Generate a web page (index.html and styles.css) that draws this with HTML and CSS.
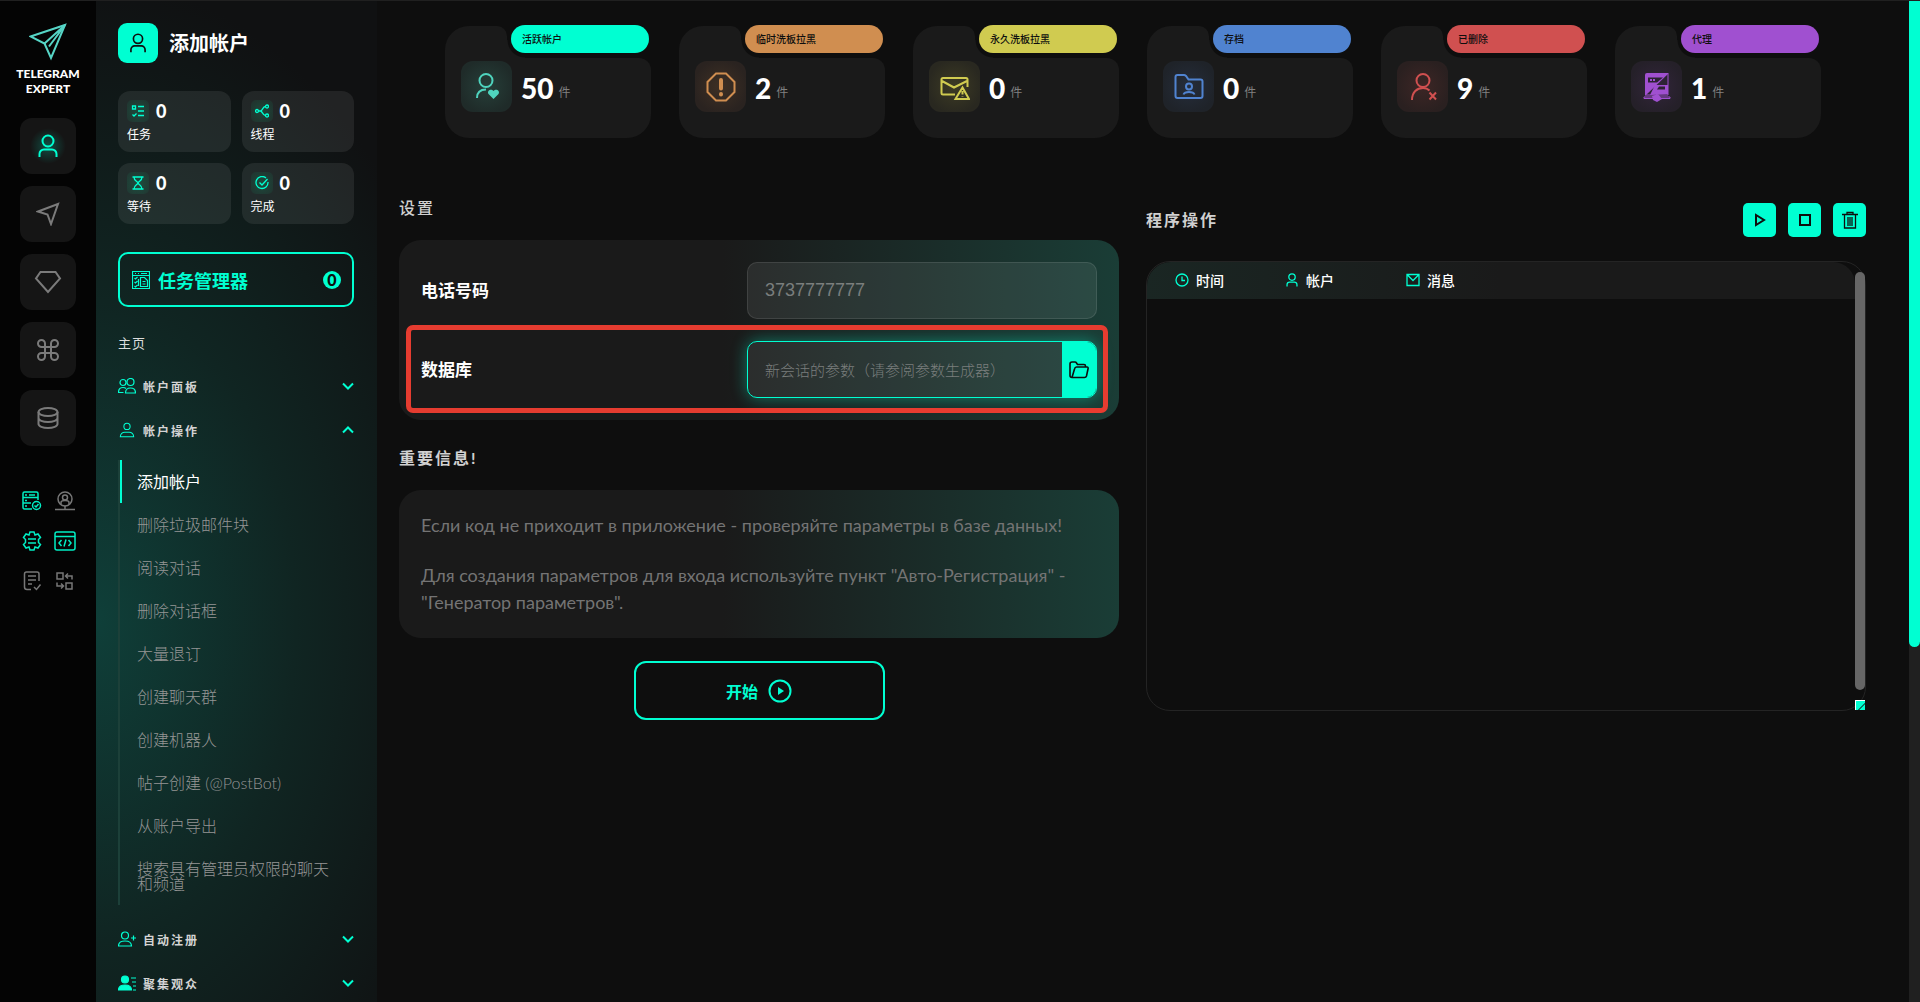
FILE: index.html
```html
<!DOCTYPE html>
<html lang="zh-CN">
<head>
    <meta charset="UTF-8">
    <meta name="viewport" content="width=device-width, initial-scale=1.0">
    <title>Telegram Expert</title>
    <link rel="stylesheet" href="styles.css">
</head>
<body>
    <svg class="sprite" aria-hidden="true">
        <symbol id="user" viewBox="0 0 24 24"><circle cx="12" cy="7" r="5.500"/><path d="M3.500 23v-3a4.500 4.500 0 0 1 4.500-4.500h8a4.500 4.500 0 0 1 4.500 4.500v3"/></symbol>
        <symbol id="person" viewBox="0 0 18 18"><circle cx="9" cy="5" r="3.500"/><path d="M1.500 16.500c0-3 2.500-5 5-5h5c2.500 0 5 2 5 5z"/></symbol>
        <symbol id="chevron" viewBox="0 0 12 8"><path d="M1 1.500l5 5 5-5"/></symbol>
    </svg>

    <div class="layout">
        <div class="rail">
            <a class="logo" href="#">
                <svg width="38" height="38" viewBox="0 0 38 38"><path d="M1.500 13.500L36 2 22 35l-6.500-14.500z"/><path d="M15.500 20.500L36 2 20 23.500"/></svg>
                <span>TELEGRAM<br>EXPERT</span>
            </a>
            <nav class="rail-nav">
                <button class="active" aria-label="帐户"><svg width="24" height="26"><use href="#user"/></svg></button>
                <button aria-label="发送"><svg width="24" height="24" viewBox="0 0 24 24"><path d="M2 9.500L22 2l-7 20-3.500-9.500z"/></svg></button>
                <button aria-label="高级"><svg width="28" height="24" viewBox="0 0 28 24"><path d="M6.500 2h15L26 8.500 14 22 2 8.500z"/></svg></button>
                <button aria-label="命令"><svg width="24" height="24" viewBox="0 0 24 24"><path d="M9 9V5.500A3.500 3.500 0 1 0 5.500 9h13A3.500 3.500 0 1 0 15 5.500v13a3.500 3.500 0 1 0 3.500-3.500h-13A3.500 3.500 0 1 0 9 18.500z"/></svg></button>
                <button aria-label="数据库"><svg width="24" height="24" viewBox="0 0 24 24"><ellipse cx="12" cy="6" rx="9.500" ry="4"/><path d="M2.500 6v12c0 2.200 4.300 4 9.500 4s9.500-1.800 9.500-4V6M2.500 12c0 2.200 4.300 4 9.500 4s9.500-1.800 9.500-4"/></svg></button>
            </nav>
            <div class="tools">
                <a href="#" class="on" aria-label="服务器"><svg width="20" height="20" viewBox="0 0 20 20"><path d="M10 18H2.500Q1 18 1 16.500v-14Q1 1 2.500 1h12Q16 1 16 2.500V9M1 6.500h15M1 12h8M3 4h2M7 4h6M3 9.500h2M3 15h2"/><circle cx="14.500" cy="14.500" r="4"/><path d="M12.500 14.500l1.500 1.500 2.500-3"/></svg></a>
                <a href="#" aria-label="代理"><svg width="20" height="20" viewBox="0 0 20 20"><circle cx="10" cy="8" r="7"/><circle cx="10" cy="6.500" r="2.500"/><path d="M6 13v-1.500Q6 9.500 10 9.500t4 2V13M10 15v3M0 18.500h20"/></svg></a>
                <a href="#" class="on" aria-label="设置"><svg width="20" height="20" viewBox="0 0 20 20"><path d="M8 1h4l1 3 3-1 2.500 3.500-2 2v3l2 2L16 17l-3-1-1 3H8l-1-3-3 1-2.500-3.500 2-2v-3l-2-2L4 3l3 1z"/><path d="M6 8h8M6 12h8"/></svg></a>
                <a href="#" class="on" aria-label="代码"><svg width="22" height="20" viewBox="0 0 22 20"><rect x="1" y="1" width="20" height="18" rx="2"/><path d="M1 5.500h20M7.500 9L5 12l2.500 3M14.500 9l2.500 3-2.500 3M12 8.500l-2 7"/></svg></a>
                <a href="#" aria-label="报告"><svg width="20" height="20" viewBox="0 0 20 20"><path d="M9 18.500H5Q2.500 18.500 2.500 16V3Q2.500 1 4.500 1H15q2 0 2 2v7M6 5h8M6 9h8M6 13h4M12 16l2.500 2.500 4-5"/></svg></a>
                <a href="#" aria-label="转换"><svg width="20" height="20" viewBox="0 0 20 20"><rect x="2" y="2" width="6" height="6"/><rect x="11" y="12" width="6" height="6"/><path d="M17 8.500V5h-6M13 2.500L10.500 5 13 7.500M2 11.500V15h6M6 12.500L8.500 15 6 17.500"/></svg></a>
            </div>
        </div>

        <aside class="sidebar">
            <div class="page-title">
                <span class="title-icon"><svg width="20" height="22"><use href="#user"/></svg></span>
                <h1>添加帐户</h1>
            </div>

            <div class="counters">
                <div class="counter">
                    <div><i><svg width="14" height="14" viewBox="0 0 14 14"><path d="M1.500 2h3v3h-3zM7 2.500h6M7 7h6M7 11.500h6M1.500 10.500L3 12l2.500-2.500"/></svg></i><b>0</b></div>
                    <span>任务</span>
                </div>
                <div class="counter">
                    <div><i><svg width="14" height="14" viewBox="0 0 14 14"><circle cx="2" cy="7" r="1.500"/><circle cx="12" cy="2.500" r="1.500"/><circle cx="12" cy="11.500" r="1.500"/><path d="M3.500 7h2c2 0 2-4.500 5-4.500M5.500 7c2 0 2 4.500 5 4.500"/></svg></i><b>0</b></div>
                    <span>线程</span>
                </div>
                <div class="counter">
                    <div><i><svg width="14" height="14" viewBox="0 0 14 14"><path d="M1.500 1h11M1.500 13h11M3 1c0 4 3 4 4 6 1-2 4-2 4-6M3 13c0-4 3-4 4-6 1 2 4 2 4 6"/></svg></i><b>0</b></div>
                    <span>等待</span>
                </div>
                <div class="counter">
                    <div><i><svg width="14" height="14" viewBox="0 0 14 14"><path d="M13 6a6 6 0 1 1-2-4M4.500 6.500L7 9l5.500-6"/></svg></i><b>0</b></div>
                    <span>完成</span>
                </div>
            </div>

            <button class="manager">
                <svg width="18" height="18" viewBox="0 0 18 18"><path d="M.5.500h17v17H.5zM.5 4.500h17M3 2.500h1M6 2.500h1M9 2.500h6M2.500 7l1 1 2-2M2.500 11l1 1 2-2M2.500 15l1 1 2-2M8.500 6.500h4l3 3v6h-7zM10.500 10.500h3M10.500 13h3M6.500 8v7"/></svg>
                任务管理器
                <span class="badge">0</span>
            </button>

            <p class="menu-caption">主页</p>
            <nav class="menu">
                <button class="group">
                    <svg width="18" height="16" viewBox="0 0 18 16"><circle cx="5" cy="4.500" r="3"/><circle cx="12.500" cy="4" r="3.500"/><path d="M7.500 15q0-5 5-5t5 5zM5.500 14.500h-5q0-5 4.500-5 2 0 3 1"/></svg>
                    帐户面板
                    <svg class="arrow" width="12" height="8"><use href="#chevron"/></svg>
                </button>
                <button class="group open">
                    <svg width="18" height="16"><use href="#person"/></svg>
                    帐户操作
                    <svg class="arrow" width="12" height="8"><use href="#chevron"/></svg>
                </button>
                <ul class="submenu">
                    <li class="current"><a href="#">添加帐户</a></li>
                    <li><a href="#">删除垃圾邮件块</a></li>
                    <li><a href="#">阅读对话</a></li>
                    <li><a href="#">删除对话框</a></li>
                    <li><a href="#">大量退订</a></li>
                    <li><a href="#">创建聊天群</a></li>
                    <li><a href="#">创建机器人</a></li>
                    <li><a href="#">帖子创建 (@PostBot)</a></li>
                    <li><a href="#">从账户导出</a></li>
                    <li><a href="#">搜索具有管理员权限的聊天和频道</a></li>
                </ul>
                <button class="group">
                    <svg width="18" height="16" viewBox="0 0 18 16"><circle cx="7" cy="4.500" r="3.500"/><path d="M.5 15q0-5 6.500-5t6.500 5zM15.500 4.500v5M13 7h5"/></svg>
                    自动注册
                    <svg class="arrow" width="12" height="8"><use href="#chevron"/></svg>
                </button>
                <button class="group">
                    <svg width="18" height="16" viewBox="0 0 18 16"><g fill="#00ffd2"><circle cx="7" cy="4.500" r="3.500"/><path d="M.5 15q0-5 6.500-5t6.500 5z"/></g><path d="M13 3h5M14 7h4M15 11h3M15 15h3"/></svg>
                    聚集观众
                    <svg class="arrow" width="12" height="8"><use href="#chevron"/></svg>
                </button>
            </nav>
        </aside>

        <main class="content">
            <section class="stats">
                <div class="stat green">
                    <div class="stat-top"><span class="tab"></span><span class="pill">活跃帐户</span></div>
                    <div class="stat-body">
                        <span class="stat-icon"><svg width="30" height="30" viewBox="0 0 30 30"><circle cx="14" cy="8.500" r="6.500"/><path d="M5 26q0-8.500 9-8.500"/><path class="solid" d="M21.500 27l-5-5c-2-3 2.500-6 5-3 2.500-3 7 0 5 3z"/></svg></span>
                        <b>50</b><small>件</small>
                    </div>
                </div>
                <div class="stat orange">
                    <div class="stat-top"><span class="tab"></span><span class="pill">临时洗板拉黑</span></div>
                    <div class="stat-body">
                        <span class="stat-icon"><svg width="30" height="30" viewBox="0 0 30 30"><path d="M10 1.500h10l8.500 8.500v10L20 28.500H10L1.500 20V10z"/><path class="bar" d="M15 8v8.500M15 22v.5"/></svg></span>
                        <b>2</b><small>件</small>
                    </div>
                </div>
                <div class="stat yellow">
                    <div class="stat-top"><span class="tab"></span><span class="pill">永久洗板拉黑</span></div>
                    <div class="stat-body">
                        <span class="stat-icon"><svg width="30" height="30" viewBox="0 0 30 30"><path d="M15 22.500H3q-1.500 0-1.500-1.500V7.500Q1.500 6 3 6h23q1.500 0 1.500 1.500V15M2 9l12 6.500L27 9M22.500 15.500L15.500 27h13.500zM22.500 19v3.500M22.500 24.500v.5"/></svg></span>
                        <b>0</b><small>件</small>
                    </div>
                </div>
                <div class="stat blue">
                    <div class="stat-top"><span class="tab"></span><span class="pill">存档</span></div>
                    <div class="stat-body">
                        <span class="stat-icon"><svg width="30" height="30" viewBox="0 0 30 30"><path d="M1.500 24V5q0-2 2-2H10q1 0 2 1l2.500 3.500h12q2 0 2 2V24q0 2-2 2h-23q-2 0-2-2z"/><circle cx="15" cy="14.500" r="3"/><path d="M9.500 22.500q1-2.500 5.500-2.500t5.500 2.500"/></svg></span>
                        <b>0</b><small>件</small>
                    </div>
                </div>
                <div class="stat red">
                    <div class="stat-top"><span class="tab"></span><span class="pill">已删除</span></div>
                    <div class="stat-body">
                        <span class="stat-icon"><svg width="30" height="30" viewBox="0 0 30 30"><circle cx="15" cy="8.500" r="6.500"/><path d="M4 28c0-8 5-12 11-12 3 0 5 1 6.500 2.500M21.500 20.500l6.500 7M28 20.500l-6.500 7"/></svg></span>
                        <b>9</b><small>件</small>
                    </div>
                </div>
                <div class="stat purple">
                    <div class="stat-top"><span class="tab"></span><span class="pill">代理</span></div>
                    <div class="stat-body">
                        <span class="stat-icon"><svg class="thin" width="30" height="30" viewBox="0 0 30 30"><path class="solid" d="M3 3q0-2 2-2h22L3 24z"/><path d="M26 2v21H4M26 13L14 23"/><path class="hole" d="M6 5.500h15L15 10.500H6z"/><path class="solid" d="M8 7h2v2H8zM11 7h2v2h-2zM13 13h13v9L8 23z"/><path class="hole" d="M17 14.500h6v3h-8z"/><path d="M2 26.500h26v-1.500H2z"/><path class="solid" d="M10 24l6-2 4 5-5 3-4-2z"/></svg></span>
                        <b>1</b><small>件</small>
                    </div>
                </div>
            </section>

            <div class="columns">
                <section class="settings">
                    <h2>设置</h2>
                    <form class="panel form">
                        <div class="row">
                            <label for="phone">电话号码</label>
                            <input type="text" id="phone" class="field" placeholder="3737777777">
                        </div>
                        <div class="row marked">
                            <label for="base">数据库</label>
                            <div class="field picker">
                                <input type="text" id="base" placeholder="新会话的参数（请参阅参数生成器）">
                                <button type="button" aria-label="选择文件夹"><svg width="20" height="18" viewBox="0 0 20 18"><path d="M3 16.500q-2 0-2-2V3q0-2 2-2h3q1 0 1.500 1L8.500 3.500H15q1.500 0 1.500 1.500v1M3 16.500L5.500 8q.5-2 2-2H18q1.500 0 1 2l-1.500 7q-.5 1.500-2 1.500z"/></svg></button>
                            </div>
                        </div>
                    </form>

                    <h2 class="strong">重要信息!</h2>
                    <div class="panel info" lang="ru">
                        <p>Если код не приходит в приложение - проверяйте параметры в базе данных!</p>
                        <p>Для создания параметров для входа используйте пункт "Авто-Регистрация" - "Генератор параметров".</p>
                    </div>

                    <button class="start">开始 <svg width="24" height="24" viewBox="0 0 24 24"><circle cx="12" cy="12" r="10.500"/><path class="solid" d="M10 8v8l6-4z"/></svg></button>
                </section>

                <section class="log">
                    <div class="log-head">
                        <h2>程序操作</h2>
                        <div class="log-buttons">
                            <button aria-label="开始"><svg width="12" height="14" viewBox="0 0 12 14"><path d="M2 2v10l8-5z"/></svg></button>
                            <button aria-label="停止"><svg width="14" height="14" viewBox="0 0 14 14"><path d="M2 2h10v10H2z"/></svg></button>
                            <button aria-label="清除"><svg class="fine" width="16" height="18" viewBox="0 0 16 18"><path d="M0 3.500h16M5 3V1.500h6V3M2.500 4v13h11V4M6 6v9M8 6v9M10 6v9"/></svg></button>
                        </div>
                    </div>
                    <div class="log-box">
                        <table>
                            <thead>
                                <tr>
                                    <th><span><svg width="14" height="14" viewBox="0 0 14 14"><circle cx="7" cy="7" r="6"/><path d="M7 3.500V7.500h3"/></svg>时间</span></th>
                                    <th><span><svg class="thick" width="14" height="14"><use href="#user"/></svg>帐户</span></th>
                                    <th><span><svg width="14" height="14" viewBox="0 0 14 14"><path d="M1 1.500h12v11H1zM1.500 2L7 7.500 12.500 2"/></svg>消息</span></th>
                                </tr>
                            </thead>
                            <tbody></tbody>
                        </table>
                        <div class="log-scroll"><span class="log-thumb"></span><span class="resizer"></span></div>
                    </div>
                </section>
            </div>
        </main>

        <div class="page-scroll"><span></span></div>
    </div>
</body>
</html>
```
FILE: styles.css
```css
* {
    box-sizing: border-box;
}

body {
    margin: 0;
    background-color: #0e0e0e;
    color: #fff;
    font-family: Lato, "Noto Sans CJK SC", sans-serif;
    overflow: hidden;
}

h1, h2, p, ul {
    margin: 0;
    padding: 0;
}

button {
    font-family: inherit;
    cursor: pointer;
    border: none;
    padding: 0;
}

a {
    color: inherit;
    text-decoration: none;
}

svg {
    display: block;
    flex-shrink: 0;
    fill: none;
    stroke: currentColor;
    stroke-width: 2;
}

.sprite {
    position: absolute;
    width: 0;
    height: 0;
}

.layout {
    display: flex;
    height: 100vh;
    border-top: 1px solid #202020;
}

/* left rail */
.rail {
    width: 96px;
    flex-shrink: 0;
    background-color: #040404;
    display: flex;
    flex-direction: column;
    align-items: center;
    padding-top: 22px;
}

.logo {
    display: flex;
    flex-direction: column;
    align-items: center;
    text-align: center;
    font-size: 12px;
    line-height: 15px;
    font-weight: 900;
}

.logo svg {
    margin-bottom: 5px;
    color: #56d5c6;
}

.rail-nav {
    display: flex;
    flex-direction: column;
    gap: 12px;
    margin-top: 22px;
}

.rail-nav button {
    width: 56px;
    height: 56px;
    border-radius: 12px;
    background-color: #151515;
    color: #7b7b7b;
    display: flex;
    align-items: center;
    justify-content: center;
}

.rail-nav .active {
    color: #00ffd2;
    background-image: radial-gradient(circle, rgba(0, 255, 210, 0.25), transparent 45%);
}

.tools {
    display: grid;
    grid-template-columns: 22px 22px;
    gap: 20px 11px;
    margin-top: 45px;
    color: #777;
    justify-items: center;
}

.tools svg {
    stroke-width: 1.5;
}

.tools .on {
    color: #00eec4;
}

/* sidebar */
.sidebar {
    width: 281px;
    flex-shrink: 0;
    padding: 22px 23px 0 22px;
    overflow: hidden;
    background: #101112 radial-gradient(ellipse 400px 640px at 0 62%, #0f3f39, #102522 50%, #101112);
}

.page-title {
    display: flex;
    align-items: center;
    gap: 11px;
}

.title-icon {
    width: 40px;
    height: 40px;
    border-radius: 9px;
    background-color: #00ffd2;
    color: #0e0e0e;
    display: flex;
    align-items: center;
    justify-content: center;
}

h1 {
    font-size: 20px;
    line-height: 30px;
    font-weight: 700;
}

.counters {
    display: grid;
    grid-template-columns: 1fr 1fr;
    gap: 11px;
    margin-top: 28px;
}

.counter {
    height: 61px;
    padding: 9px;
    border-radius: 12px;
    background-color: rgba(255, 255, 255, 0.08);
}

.counter div {
    display: flex;
    align-items: center;
    gap: 7px;
}

.counter i {
    width: 22px;
    height: 22px;
    border-radius: 5px;
    color: #00ffd2;
    background: radial-gradient(circle, rgba(0, 255, 160, 0.15), rgba(0, 255, 160, 0.04));
    display: flex;
    align-items: center;
    justify-content: center;
}

.counter svg {
    stroke-width: 1.3;
}

.counter b {
    font-size: 18px;
    line-height: 22px;
    font-weight: 900;
}

.counter span {
    display: block;
    margin-top: 4px;
    font-size: 12px;
    line-height: 18px;
}

.manager {
    display: flex;
    align-items: center;
    gap: 8px;
    width: 100%;
    height: 55px;
    margin-top: 28px;
    padding: 0 11px 0 12px;
    border: 2px solid #00ffd2;
    border-radius: 10px;
    background: none;
    color: #00ffd2;
    font-size: 18px;
    font-weight: 700;
}

.manager svg {
    stroke-width: 1.2;
}

.badge {
    margin-left: auto;
    width: 18px;
    height: 18px;
    border-radius: 50%;
    background-color: #00ffd2;
    color: #0e0e0e;
    font-size: 16px;
    line-height: 18px;
    text-align: center;
    font-weight: 900;
}

.menu-caption {
    margin-top: 26px;
    font-size: 13px;
    line-height: 20px;
    color: #ddd;
    letter-spacing: 1px;
}

.menu {
    margin-top: 11px;
}

.group {
    display: flex;
    align-items: center;
    gap: 7px;
    width: 100%;
    height: 44px;
    background: none;
    color: #d4d4d4;
    font-size: 12px;
    font-weight: 700;
    letter-spacing: 2px;
}

.group svg {
    color: #00ffd2;
    stroke-width: 1.2;
}

.group .arrow {
    margin-left: auto;
    stroke-width: 2;
}

.group.open .arrow {
    transform: rotate(180deg);
}

.submenu {
    list-style: none;
    margin: 8px 0 12px;
    border-left: 2px solid #1c4039;
    color: #959595;
    font-size: 16px;
    line-height: 15px;
    font-weight: 300;
}

.submenu a {
    display: block;
    padding: 14px 12px 14px 17px;
}

.submenu .current a {
    padding-left: 15px;
    border-left: 2px solid #00ffd2;
    color: #fff;
    font-weight: 400;
}

/* main part */
.content {
    flex: 1;
    min-width: 0;
    padding: 24px 43px 0 22px;
}

.stats {
    display: grid;
    grid-template-columns: repeat(6, 1fr);
    gap: 28px;
    padding: 0 45px 0 46px;
}

.stat-top {
    display: flex;
    height: 33px;
}

.tab {
    position: relative;
    width: 62px;
    margin-top: 1px;
    border-radius: 24px 10px 0 0;
    background-color: #1a1a1a;
}

/* rounded inner corner under the pill */
.tab::after {
    content: "";
    position: absolute;
    left: 100%;
    bottom: 0;
    width: 18px;
    height: 18px;
    background: radial-gradient(circle at 100% 0, transparent 17px, #1a1a1a 18px);
}

.pill {
    flex: 1;
    height: 28px;
    margin: 0 2px 0 4px;
    padding-left: 11px;
    border-radius: 14px;
    background-color: var(--tone);
    color: #0e0e0e;
    font-size: 10px;
    line-height: 28px;
    font-weight: 500;
    position: relative;
    z-index: 1;
}

.stat-body {
    display: flex;
    align-items: center;
    padding: 3px 16px 26px;
    border-radius: 0 12px 24px 24px;
    background-color: #1a1a1a;
}

.stat-icon {
    width: 51px;
    height: 51px;
    margin-right: 9px;
    border-radius: 12px;
    color: var(--tone);
    background: radial-gradient(circle, var(--glow), var(--edge) 75%);
    display: flex;
    align-items: center;
    justify-content: center;
}

.stat-body b {
    margin-top: 2px;
    font-size: 28px;
    line-height: 34px;
    font-weight: 900;
}

.stat-body small {
    margin: 12px 0 0 5px;
    color: #808080;
    font-size: 12px;
    line-height: 18px;
    font-weight: 400;
}

.solid {
    fill: currentColor;
    stroke: none;
}

.bar {
    stroke-width: 4;
    stroke-linecap: round;
}

.thin {
    stroke-width: 1;
}

.hole {
    fill: #2c2333;
    stroke: none;
}

.green { --tone: #00ffd2; --glow: #263f39; --edge: #1f2b29; }
.green .stat-icon { color: #4fd4be; }
.orange { --tone: #d08e50; --glow: #3f3024; --edge: #2a2320; }
.yellow { --tone: #d0cb50; --glow: #3d3b24; --edge: #292820; }
.blue { --tone: #5083d0; --glow: #252d3b; --edge: #1f2329; }
.red { --tone: #d05050; --glow: #3d2625; --edge: #2a2020; }
.purple { --tone: #a050d0; --glow: #32253b; --edge: #252029; }

.columns {
    display: grid;
    grid-template-columns: 1fr 1fr;
    gap: 27px;
    margin-top: 58px;
}

h2 {
    color: #d0d0d0;
    font-size: 16px;
    line-height: 24px;
    font-weight: 500;
    letter-spacing: 2px;
}

.panel {
    margin-top: 20px;
    padding: 22px;
    border-radius: 22px;
    background: linear-gradient(90deg, #1a1a1a 45%, #1a3d36);
}

.strong {
    margin-top: 26px;
    font-weight: 700;
}

.form {
    display: flex;
    flex-direction: column;
    gap: 22px;
}

.row {
    position: relative;
    display: flex;
    align-items: center;
    justify-content: space-between;
}

/* red frame round the database row */
.marked::after {
    content: "";
    position: absolute;
    inset: -16px -11px -15px -15px;
    border: 5px solid #e63c30;
    border-radius: 7px;
    pointer-events: none;
}

.row label {
    font-size: 17px;
    line-height: 24px;
    font-weight: 700;
}

.field {
    width: 350px;
    height: 57px;
    padding: 0 17px;
    border: 1px solid rgba(255, 255, 255, 0.1);
    border-radius: 10px;
    background-color: rgba(255, 255, 255, 0.08);
    color: #fff;
    font-family: "Liberation Sans", Arial, sans-serif;
    font-size: 18px;
}

.field::placeholder,
.picker input::placeholder {
    color: #7a7e7d;
    opacity: 1;
}

.picker {
    display: flex;
    padding-right: 0;
    border-color: #00ffd2;
    box-shadow: 0 0 16px rgba(0, 255, 210, 0.4);
    overflow: hidden;
}

.picker input {
    flex: 1;
    min-width: 0;
    padding: 0;
    border: none;
    outline: none;
    background: none;
    color: #fff;
    font-family: "Noto Sans CJK SC", sans-serif;
    font-size: 15px;
    font-weight: 300;
}

.picker button {
    width: 34px;
    background-color: #00ffd2;
    color: #0e0e0e;
    display: flex;
    align-items: center;
    justify-content: center;
}

.picker svg {
    stroke-width: 1.6;
}

.info {
    color: #747474;
    font-size: 18px;
    line-height: 27px;
}

.info p + p {
    margin-top: 23px;
}

.start {
    display: flex;
    align-items: center;
    justify-content: center;
    gap: 10px;
    width: 251px;
    height: 59px;
    margin: 23px auto 0;
    border: 2px solid #00ffd2;
    border-radius: 12px;
    background: none;
    color: #00ffd2;
    font-size: 16px;
    font-weight: 700;
}

/* log */
.log-head {
    display: flex;
    align-items: center;
    justify-content: space-between;
    margin-top: 7px;
}

.log-head h2 {
    font-weight: 700;
}

.log-buttons {
    display: flex;
    gap: 12px;
}

.log-buttons button {
    width: 33px;
    height: 34px;
    border-radius: 5px;
    background-color: #00ffd2;
    color: #0e0e0e;
    display: flex;
    align-items: center;
    justify-content: center;
}

.fine {
    stroke-width: 1.3;
}

.log-box {
    display: flex;
    align-items: flex-start;
    height: 450px;
    margin-top: 24px;
    border: 1px solid #242424;
    border-radius: 24px;
}

table {
    flex: 1;
    border-spacing: 0;
    border-radius: 24px 22px 0 0;
    background: linear-gradient(90deg, #1a2623, #1a1a1a 50%);
}

th {
    height: 37px;
    padding: 0 0 2px 28px;
    font-size: 14px;
    font-weight: 500;
    text-align: left;
}

th:nth-child(1) {
    width: 110px;
}

th:nth-child(2) {
    width: 121px;
}

th span {
    display: flex;
    align-items: center;
    gap: 7px;
}

th svg {
    color: #00ffd2;
    stroke-width: 1.3;
}

th .thick {
    stroke-width: 2.2;
}

.log-scroll {
    width: 10px;
    height: 448px;
    padding-top: 10px;
    display: flex;
    flex-direction: column;
    justify-content: space-between;
}

.log-thumb {
    height: 418px;
    border-radius: 5px;
    background-color: #666;
}

.resizer {
    height: 10px;
    border: 1px solid #fff;
    border-width: 1px 0 0 1px;
    background: linear-gradient(135deg, #00ffd2 60%, #087a66 60%, #087a66 70%, #00ffd2 70%);
}

/* page scrollbar */
.page-scroll {
    width: 11px;
    background-color: #202020;
}

.page-scroll span {
    display: block;
    height: 64.5%;
    border-radius: 0 0 6px 6px;
    background-color: #00ffd2;
}
```
